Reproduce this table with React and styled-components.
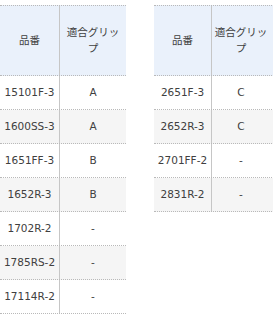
import React from "react";
import styled, { createGlobalStyle } from "styled-components";

const GlobalStyle = createGlobalStyle`
  html, body {
    margin: 0;
    padding: 0;
    background: #ffffff;
  }
  body {
    font-family: "DejaVu Sans", "Noto Sans CJK JP", sans-serif;
    font-size: 10.5px;
    color: #404040;
  }
`;

const Page = styled.div`
  display: flex;
  align-items: flex-start;
  gap: 28px;
  padding-top: 5px;
  overflow: hidden;
  width: 273px;
`;

const GripTable = styled.div`
  display: flex;
  flex-direction: column;
  flex: none;
`;

const Row = styled.div`
  display: grid;
  grid-template-columns: ${(p) => p.$cols};
  box-sizing: border-box;
  border-bottom: 1px dotted #b9b9b9;
`;

const HeaderRow = styled(Row)`
  height: 71px;
  background: #eaf1fb;
  border-top: 1px dotted #b9b9b9;
`;

const BodyRow = styled(Row)`
  height: 34px;
  background: ${(p) => (p.$shade ? "#f5f5f5" : "#ffffff")};
`;

const Cell = styled.div`
  display: flex;
  align-items: center;
  justify-content: center;
  text-align: center;
  box-sizing: border-box;
  line-height: 1.45;
  padding: 0 ${(p) => p.$padR || 4}px 0 4px;
  overflow: hidden;
  white-space: nowrap;
`;

const KeyCell = styled(Cell)`
  border-right: 1px solid #c6c6c6;
`;

const HeadLabel = styled.span`
  display: block;
  white-space: normal;
  width: ${(p) => p.$w}px;
  flex: none;
  text-align: center;
  word-break: break-all;
`;

const leftRows = [
  ["15101F-3", "A"],
  ["1600SS-3", "A"],
  ["1651FF-3", "B"],
  ["1652R-3", "B"],
  ["1702R-2", "-"],
  ["1785RS-2", "-"],
  ["17114R-2", "-"],
];

const rightRows = [
  ["2651F-3", "C"],
  ["2652R-3", "C"],
  ["2701FF-2", "-"],
  ["2831R-2", "-"],
];

function Table({ rows, cols, padR }) {
  return (
    <GripTable>
      <HeaderRow $cols={cols}>
        <KeyCell>品番</KeyCell>
        <Cell $padR={padR}>
          <HeadLabel $w={56}>適合グリップ</HeadLabel>
        </Cell>
      </HeaderRow>
      {rows.map(([code, grip], i) => (
        <BodyRow key={code} $cols={cols} $shade={i % 2 === 1}>
          <KeyCell>{code}</KeyCell>
          <Cell $padR={padR}>{grip}</Cell>
        </BodyRow>
      ))}
    </GripTable>
  );
}

export default function App() {
  return (
    <>
      <GlobalStyle />
      <Page>
        <Table rows={leftRows} cols="60px 66px" />
        <Table rows={rightRows} cols="58px 64px" padR={10} />
      </Page>
    </>
  );
}
